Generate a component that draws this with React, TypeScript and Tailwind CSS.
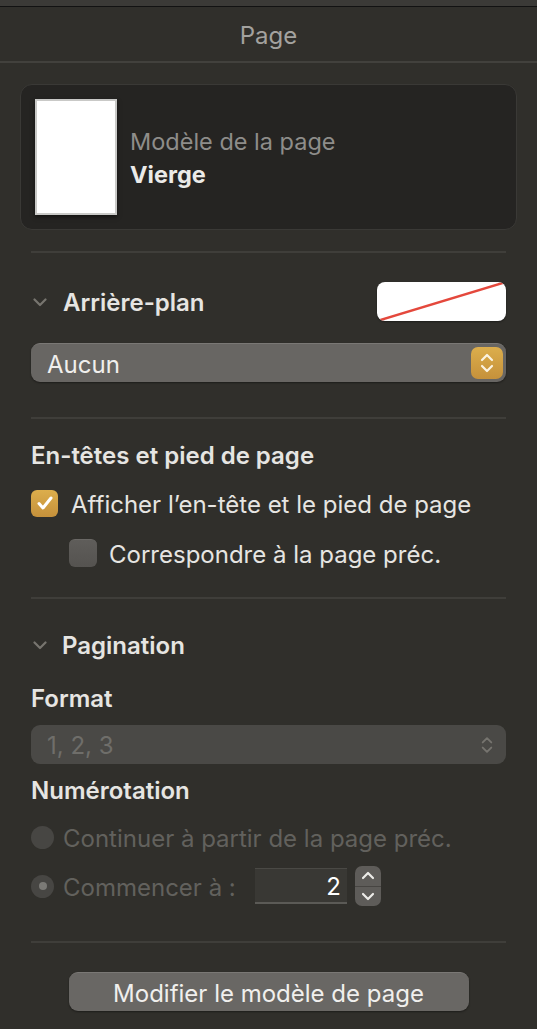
import React from "react";

const font = { fontFamily: "Inter, 'Noto Sans', 'Liberation Sans', sans-serif" };

function Chevron() {
  return (
    <svg width="14" height="9" viewBox="0 0 14 9" className="shrink-0">
      <path d="M1.5 1.5 L7 7 L12.5 1.5" fill="none" stroke="#77756f" strokeWidth="2.2" strokeLinecap="round" strokeLinejoin="round" />
    </svg>
  );
}

function UpDown({ color, w = 14, h = 24 }: { color: string; w?: number; h?: number }) {
  return (
    <svg width={w} height={h} viewBox="0 0 14 24">
      <path d="M2 9 L7 4 L12 9" fill="none" stroke={color} strokeWidth="2.2" strokeLinecap="round" strokeLinejoin="round" />
      <path d="M2 15 L7 20 L12 15" fill="none" stroke={color} strokeWidth="2.2" strokeLinecap="round" strokeLinejoin="round" />
    </svg>
  );
}

function Sep({ mt }: { mt: string }) {
  return <div className={`h-[2px] bg-[#3f3e3a] ${mt}`} />;
}

export default function App() {
  return (
    <div className="w-[537px] h-[1029px] bg-[#302f2b] flex flex-col overflow-hidden text-[#e6e5e2] text-[24px] leading-[28px]" style={font}>
      <div className="h-[7px] bg-[#3b3a37] border-b border-[#121212] shrink-0" />
      <div className="h-[54px] flex items-center justify-center text-[24px] text-[#a3a29f] shrink-0 pt-[4px]">Page</div>
      <div className="h-[2px] bg-[#42413d] shrink-0" />

      <div className="mx-[20px] mt-[21px] h-[146px] rounded-[12px] bg-[#252422] border border-[#3a3936] flex items-center pl-[14px] shrink-0">
        <div className="w-[82px] h-[116px] bg-white border-2 border-[#c9c9c7] shadow-[0_2px_4px_rgba(0,0,0,0.5)] shrink-0" />
        <div className="ml-[13px] flex flex-col leading-[33px] mt-[2px]">
          <span className="text-[23.5px] text-[#8e8d8a]">Modèle de la page</span>
          <span className="text-[23.5px] font-bold text-[#ebeae8]">Vierge</span>
        </div>
      </div>

      <div className="px-[31px] flex flex-col">
        <Sep mt="mt-[21px]" />

        <div className="mt-[29px] h-[39px] flex items-center justify-between">
          <div className="flex items-center">
            <div className="w-[32px] flex justify-start pl-[2px] mt-[2px]"><Chevron /></div>
            <span className="font-semibold pt-[3px]">Arrière-plan</span>
          </div>
          <div className="w-[129px] h-[39px] bg-white rounded-[8px] overflow-hidden shadow-[0_1px_2px_rgba(0,0,0,0.4)]">
            <svg width="129" height="39" viewBox="0 0 129 39">
              <line x1="0" y1="39" x2="129" y2="0" stroke="#e4483c" strokeWidth="2.5" />
            </svg>
          </div>
        </div>

        <div className="mt-[22px] h-[39px] rounded-[9px] bg-[#686663] border-t border-[#7a7875] shadow-[0_1px_2px_rgba(0,0,0,0.4)] flex items-center justify-between pl-[16px] pr-[3px]">
          <span className="text-[#f0efed] pt-[3px]">Aucun</span>
          <div className="w-[32px] h-[32px] rounded-[7px] bg-gradient-to-b from-[#dcae4c] to-[#c5913b] flex items-center justify-center">
            <UpDown color="#fbf3e2" />
          </div>
        </div>

        <Sep mt="mt-[35px]" />

        <div className="mt-[21px] h-[28px] flex items-center font-semibold"><span className="pt-[3px]">En-têtes et pied de page</span></div>

        <div className="mt-[21px] h-[28px] flex items-center">
          <div className="w-[27px] h-[27px] rounded-[6px] bg-gradient-to-b from-[#dcae4c] to-[#c5913b] flex items-center justify-center shrink-0">
            <svg width="18" height="16" viewBox="0 0 18 16">
              <path d="M3 8.5 L7 13 L15 3" fill="none" stroke="#ffffff" strokeWidth="3" strokeLinecap="round" strokeLinejoin="round" />
            </svg>
          </div>
          <span className="ml-[13px] whitespace-nowrap pt-[3px]">Afficher l’en-tête et le pied de page</span>
        </div>

        <div className="mt-[22px] h-[28px] flex items-center pl-[38px]">
          <div className="w-[28px] h-[28px] rounded-[6px] bg-gradient-to-b from-[#5f5d5a] to-[#555350] border-t border-[#6a6865] shrink-0" />
          <span className="ml-[12px] whitespace-nowrap pt-[3px]">Correspondre à la page préc.</span>
        </div>

        <Sep mt="mt-[30px]" />

        <div className="mt-[31px] h-[28px] flex items-center">
          <div className="w-[31px] flex justify-start pl-[2px] mt-[2px]"><Chevron /></div>
          <span className="font-semibold pt-[3px]">Pagination</span>
        </div>

        <div className="mt-[25px] h-[28px] flex items-center font-semibold"><span className="pt-[3px]">Format</span></div>

        <div className="mt-[14px] h-[39px] rounded-[9px] bg-[#4a4946] flex items-center justify-between pl-[16px] pr-[13px]">
          <span className="text-[#6f6e6a] pt-[3px]">1, 2, 3</span>
          <UpDown color="#76746f" w={12} h={22} />
        </div>

        <div className="mt-[11px] h-[28px] flex items-center font-semibold"><span className="pt-[3px]">Numérotation</span></div>

        <div className="mt-[20px] h-[28px] flex items-center">
          <div className="w-[23px] h-[23px] rounded-full bg-[#474643] shrink-0" />
          <span className="ml-[9px] text-[#62615d] whitespace-nowrap pt-[3px]">Continuer à partir de la page préc.</span>
        </div>

        <div className="mt-[15px] h-[40px] flex items-center">
          <div className="w-[23px] h-[23px] rounded-full bg-[#474643] flex items-center justify-center shrink-0">
            <div className="w-[8px] h-[8px] rounded-full bg-[#7b7a76]" />
          </div>
          <span className="ml-[9px] w-[192px] text-[#62615d] whitespace-nowrap pt-[3px]">Commencer à :</span>
          <div className="w-[92px] h-[36px] bg-[#393834] border-t border-[#4a4945] border-b-2 border-b-[#5b5a56] flex items-center justify-end pr-[6px]">
            <span className="text-white pt-[3px]">2</span>
          </div>
          <div className="ml-[8px] w-[26px] h-[40px] rounded-[7px] bg-[#5e5c59] flex flex-col overflow-hidden">
            <div className="flex-1 flex items-center justify-center border-b border-[#474542]">
              <svg width="14" height="9" viewBox="0 0 14 9"><path d="M2 7 L7 2 L12 7" fill="none" stroke="#ecebe8" strokeWidth="2.2" strokeLinecap="round" strokeLinejoin="round" /></svg>
            </div>
            <div className="flex-1 flex items-center justify-center">
              <svg width="14" height="9" viewBox="0 0 14 9"><path d="M2 2 L7 7 L12 2" fill="none" stroke="#ecebe8" strokeWidth="2.2" strokeLinecap="round" strokeLinejoin="round" /></svg>
            </div>
          </div>
        </div>

        <Sep mt="mt-[35px]" />

        <div className="mt-[29px] flex justify-center">
          <div className="w-[400px] h-[39px] rounded-[9px] bg-[#696764] border-t border-[#7a7875] shadow-[0_1px_2px_rgba(0,0,0,0.4)] flex items-center justify-center text-[#f0efed] pt-[3px]">
            Modifier le modèle de page
          </div>
        </div>
      </div>
    </div>
  );
}
